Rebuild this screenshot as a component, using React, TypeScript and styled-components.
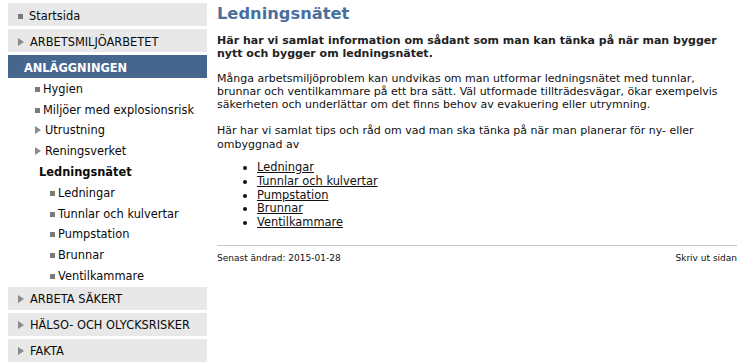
import React from "react";
import styled, { createGlobalStyle } from "styled-components";

const Global = createGlobalStyle`
  html, body { margin: 0; padding: 0; background: #ffffff; }
  body { font-family: "DejaVu Sans", Verdana, sans-serif; color: #111; }
`;

const Page = styled.div`
  display: grid;
  grid-template-columns: 199px 1fr;
  column-gap: 10px;
  padding: 3px 9px 0 8px;
  width: 746px;
  box-sizing: border-box;
`;

const Sidebar = styled.nav`
  display: flex;
  flex-direction: column;
`;

const TopItem = styled.div<{ $active?: boolean }>`
  display: flex;
  align-items: center;
  height: 23px;
  box-sizing: border-box;
  padding-top: 2px;
  margin-bottom: ${(p) => (p.$active ? "0" : "3px")};
  padding-left: ${(p) => (p.$active ? "16px" : "10px")};
  background: ${(p) => (p.$active ? "#46668d" : "#e8e8e8")};
  color: ${(p) => (p.$active ? "#ffffff" : "#0a0a0a")};
  font-size: 11.4px;
  font-weight: ${(p) => (p.$active ? "bold" : "normal")};
  white-space: nowrap;
`;

const SubList = styled.div`
  display: flex;
  flex-direction: column;
  padding: 0 0 1px 0;
`;

const SubRow = styled.div<{ $level: number; $current?: boolean }>`
  display: flex;
  align-items: center;
  height: 20.8px;
  box-sizing: border-box;
  padding-top: 1px;
  padding-left: ${(p) => (p.$level === 1 ? 27 : 42)}px;
  font-size: 11.4px;
  font-weight: ${(p) => (p.$current ? "bold" : "normal")};
  white-space: nowrap;
  color: #0a0a0a;
`;

const MarkerBox = styled.span`
  display: inline-flex;
  align-items: center;
  justify-content: flex-start;
  width: 8px;
  height: 10px;
  flex: none;
`;

const Square = styled.span`
  display: block;
  width: 5px;
  height: 5px;
  margin-top: 1px;
  background: #7a7a7a;
`;

const Gap = styled.span<{ $w: number }>`
  display: inline-block;
  width: ${(p) => p.$w}px;
  flex: none;
`;

const Triangle = () => (
  <svg width="6" height="8" viewBox="0 0 6 8" style={{ display: "block" }}>
    <polygon points="0,0 6,4 0,8" fill="#8a8a8a" />
  </svg>
);

const Content = styled.main`
  display: flex;
  flex-direction: column;
  font-size: 11px;
  line-height: 13.3px;
`;

const Title = styled.h1`
  margin: 0;
  font-size: 16.3px;
  line-height: 22px;
  font-weight: bold;
  color: #4a6f9c;
`;

const Intro = styled.p`
  margin: 9px 0 11px;
  font-weight: bold;
  color: #222;
`;

const Para = styled.p<{ $after: number }>`
  margin: 0 0 ${(p) => p.$after}px;
  color: #111;
`;

const LinkList = styled.ul`
  margin: 0 0 15px;
  padding-left: 40px;
  list-style: disc;
  font-size: 11.4px;
  line-height: 13.8px;
`;

const LinkItem = styled.li`
  color: #111;
`;

const Link = styled.a`
  color: #111;
  text-decoration: underline;
`;

const Footer = styled.footer`
  display: flex;
  justify-content: space-between;
  border-top: 1px solid #c8c8c8;
  padding-top: 6px;
  font-size: 9px;
  line-height: 12px;
  color: #111;
`;

const sub: { label: string; level: number; kind: "square" | "tri" | "none" }[] = [
  { label: "Hygien", level: 1, kind: "square" },
  { label: "Miljöer med explosionsrisk", level: 1, kind: "square" },
  { label: "Utrustning", level: 1, kind: "tri" },
  { label: "Reningsverket", level: 1, kind: "tri" },
  { label: "Ledningsnätet", level: 1, kind: "none" },
  { label: "Ledningar", level: 2, kind: "square" },
  { label: "Tunnlar och kulvertar", level: 2, kind: "square" },
  { label: "Pumpstation", level: 2, kind: "square" },
  { label: "Brunnar", level: 2, kind: "square" },
  { label: "Ventilkammare", level: 2, kind: "square" },
];

const links = ["Ledningar", "Tunnlar och kulvertar", "Pumpstation", "Brunnar", "Ventilkammare"];

export default function App() {
  return (
    <>
      <Global />
      <Page>
        <Sidebar>
          <TopItem>
            <MarkerBox><Square /></MarkerBox>
            <Gap $w={3} />
            Startsida
          </TopItem>
          <TopItem>
            <MarkerBox><Triangle /></MarkerBox>
            <Gap $w={4} />
            ARBETSMILJÖARBETET
          </TopItem>
          <TopItem $active>ANLÄGGNINGEN</TopItem>
          <SubList>
            {sub.map((s) => (
              <SubRow key={s.label} $level={s.level} $current={s.kind === "none"}>
                {s.kind === "square" && (
                  <>
                    <MarkerBox><Square /></MarkerBox>
                    <Gap $w={0} />
                  </>
                )}
                {s.kind === "tri" && (
                  <>
                    <MarkerBox><Triangle /></MarkerBox>
                    <Gap $w={2} />
                  </>
                )}
                {s.kind === "none" && <Gap $w={4} />}
                {s.label}
              </SubRow>
            ))}
          </SubList>
          {["ARBETA SÄKERT", "HÄLSO- OCH OLYCKSRISKER", "FAKTA"].map((t) => (
            <TopItem key={t}>
              <MarkerBox><Triangle /></MarkerBox>
              <Gap $w={4} />
              {t}
            </TopItem>
          ))}
        </Sidebar>
        <Content>
          <Title>Ledningsnätet</Title>
          <Intro>
            Här har vi samlat information om sådant som man kan tänka på när man bygger nytt och
            bygger om ledningsnätet.
          </Intro>
          <Para $after={13}>
            Många arbetsmiljöproblem kan undvikas om man utformar ledningsnätet med tunnlar,
            brunnar och ventilkammare på ett bra sätt. Väl utformade tillträdesvägar, ökar
            exempelvis säkerheten och underlättar om det finns behov av evakuering eller utrymning.
          </Para>
          <Para $after={10}>
            Här har vi samlat tips och råd om vad man ska tänka på när man planerar för ny- eller
            ombyggnad av
          </Para>
          <LinkList>
            {links.map((l) => (
              <LinkItem key={l}>
                <Link href="#">{l}</Link>
              </LinkItem>
            ))}
          </LinkList>
          <Footer>
            <span>Senast ändrad: 2015-01-28</span>
            <span>Skriv ut sidan</span>
          </Footer>
        </Content>
      </Page>
    </>
  );
}
